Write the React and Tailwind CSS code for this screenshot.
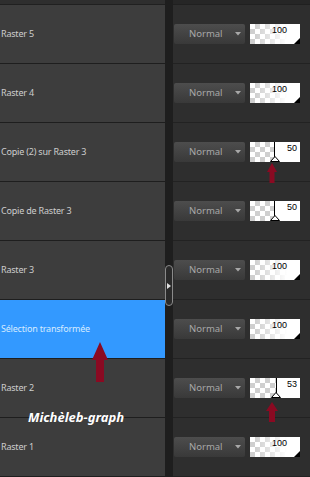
import React from "react";

const layers = [
  { name: "Raster 5", value: 100 },
  { name: "Raster 4", value: 100 },
  { name: "Copie (2) sur Raster 3", value: 50, split: true },
  { name: "Copie de Raster 3", value: 50, split: true },
  { name: "Raster 3", value: 100 },
  { name: "Sélection transformée", value: 100, selected: true },
  { name: "Raster 2", value: 53, split: true },
  { name: "Raster 1", value: 100 },
];

function RedArrow({ className }) {
  return (
    <svg viewBox="0 0 16 40" className={className} preserveAspectRatio="none">
      <path d="M8 0 L16 18 L12 18 L12 40 L4 40 L4 18 L0 18 Z" fill="#8a0a22" />
    </svg>
  );
}

function Opacity({ value, split }) {
  return (
    <div className="relative w-[50px] h-[20px] bg-white overflow-hidden">
      {split ? (
        <>
          <div
            className="absolute left-0 top-0 bottom-0 bg-[repeating-conic-gradient(#cfcfcf_0_25%,#ffffff_0_50%)] bg-[length:10px_10px] border-r border-black"
            style={{ width: `${value}%` }}
          />
          <svg
            className="absolute bottom-0 w-[10px] h-[6px]"
            style={{ left: `calc(${value}% - 5px)` }}
            viewBox="0 0 10 6"
          >
            <path d="M5 0.5 L9.5 5.5 L0.5 5.5 Z" fill="#fff" stroke="#000" strokeWidth="1" />
          </svg>
          <span className="absolute right-[3px] top-[2px] text-[9px] leading-none text-black font-['Liberation_Sans',sans-serif]">
            {value}
          </span>
        </>
      ) : (
        <>
          <div className="absolute inset-0 bg-[repeating-conic-gradient(#cfcfcf_0_25%,#ffffff_0_50%)] bg-[length:10px_10px]" />
          <div className="absolute inset-0 bg-linear-to-r from-white/0 from-10% to-white to-75%" />
          <span className="absolute right-[13px] top-[2px] text-[9px] leading-none text-black font-['Liberation_Sans',sans-serif]">
            {value}
          </span>
          <svg className="absolute right-0 bottom-0 w-[6px] h-[6px]" viewBox="0 0 6 6">
            <path d="M6 0 L6 6 L0 6 Z" fill="#000" />
          </svg>
        </>
      )}
    </div>
  );
}

function BlendSelect() {
  return (
    <div className="w-[71px] h-[20px] rounded-[2px] bg-linear-to-b from-[#4d4d4d] to-[#393939] flex items-center pl-[15px] pr-[4px]">
      <span className="text-[9.5px] text-[#a8a8a8] flex-1">Normal</span>
      <svg className="w-[6px] h-[4px]" viewBox="0 0 6 4">
        <path d="M0 0 L6 0 L3 3.5 Z" fill="#a8a8a8" />
      </svg>
    </div>
  );
}

export default function App() {
  return (
    <div className="relative w-[310px] h-[477px] overflow-hidden bg-[#2c2c2c] flex font-['Noto_Sans',sans-serif]">
      {/* layer names */}
      <div className="w-[165px] flex flex-col">
        <div className="h-[6px] bg-[#2e2e2e] border-b border-[#202020]" />
        {layers.map((l) => (
          <div
            key={l.name}
            className={`h-[59px] shrink-0 flex items-center pl-[1px] border-b border-[#1e1e1e] ${
              l.selected ? "bg-[#3399ff] text-[#d6ebff]" : "bg-[#3d3d3d] text-[#cdcdcd]"
            }`}
          >
            <span className="text-[9px] tracking-[-0.2px]">{l.name}</span>
          </div>
        ))}
      </div>

      {/* splitter */}
      <div className="w-[8px] bg-[#1e1e1e] flex flex-col">
        <div className="mt-[265px] h-[41px] w-[8px] rounded-[4px] border border-[#8a8a8a] bg-[#2a2a2a] flex items-center justify-center">
          <svg className="w-[4px] h-[6px]" viewBox="0 0 4 6">
            <path d="M0 0 L4 3 L0 6 Z" fill="#e0e0e0" />
          </svg>
        </div>
      </div>

      {/* blend + opacity */}
      <div className="flex-1 flex flex-col">
        <div className="h-[6px] bg-[#262626] border-b border-[#202020]" />
        {layers.map((l) => (
          <div
            key={l.name}
            className="h-[59px] shrink-0 flex items-center gap-[5px] pl-[1px] bg-[#2e2e2e] border-b border-[#222222]"
          >
            <BlendSelect />
            <Opacity value={l.value} split={l.split} />
          </div>
        ))}
      </div>

      {/* annotations */}
      <RedArrow className="absolute left-[267px] top-[163px] w-[10px] h-[20px]" />
      <RedArrow className="absolute left-[92px] top-[342px] w-[16px] h-[40px]" />
      <RedArrow className="absolute left-[266px] top-[402px] w-[12px] h-[20px]" />
      <span className="absolute left-[28px] top-[408px] text-[13px] leading-[18px] font-bold italic text-white">
        Michèleb-graph
      </span>
    </div>
  );
}
